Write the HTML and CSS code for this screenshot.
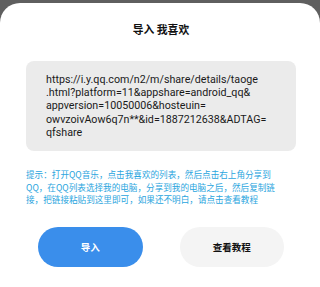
FILE: index.html
```html
<!DOCTYPE html>
<html lang="zh-CN">
<head>
<meta charset="utf-8">
<title>导入 我喜欢</title>
<link rel="stylesheet" href="styles.css">
</head>
<body>
<div class="sheet">
  <h1 class="title">导入 我喜欢</h1>
  <div class="link-box">https://i.y.qq.com/n2/m/share/details/taoge<br>.html?platform=11&amp;appshare=android_qq&amp;<br>appversion=10050006&amp;hosteuin=<br>owvzoivAow6q7n**&amp;id=1887212638&amp;ADTAG=<br>qfshare</div>
  <p class="hint">提示：打开QQ音乐，点击我喜欢的列表，然后点击右上角分享到<br>QQ，在QQ列表选择我的电脑，分享到我的电脑之后，然后复制链<br>接，把链接粘贴到这里即可，如果还不明白，请点击查看教程</p>
  <div class="actions">
    <button class="btn btn-primary">导入</button>
    <button class="btn btn-secondary">查看教程</button>
  </div>
</div>
</body>
</html>
```
FILE: styles.css
```css
html, body {
  margin: 0;
  padding: 0;
}
body {
  background: #5f5f5f;
  width: 320px;
  height: 287px;
  overflow: hidden;
  font-family: Roboto, "Noto Sans CJK SC", sans-serif;
}
.sheet {
  margin-top: 3px;
  height: 284px;
  background: #ffffff;
  border-radius: 20px 20px 0 0;
  padding: 18px 24px 0 26px;
  box-sizing: border-box;
}
.title {
  margin: 0;
  height: 16px;
  font-size: 10.8px;
  line-height: 16px;
  font-weight: 700;
  color: #111;
  text-align: center;
  font-family: "Noto Sans CJK SC", sans-serif;
}
.link-box {
  margin-top: 24px;
  height: 90px;
  box-sizing: border-box;
  background: #ebebeb;
  border-radius: 8px;
  padding: 12px 10px 0 20px;
  font-size: 10.7px;
  line-height: 13.2px;
  color: #1a1a1a;
  white-space: nowrap;
}
.hint {
  margin: 17px 0 0 0;
  height: 38px;
  font-size: 8.6px;
  line-height: 12.5px;
  color: #2aa5de;
  font-family: "Noto Sans CJK SC", sans-serif;
  white-space: nowrap;
}
.actions {
  margin-top: 21px;
  display: flex;
  gap: 37px;
  padding: 0 12px 0 12px;
}
.btn {
  flex: 1;
  height: 40px;
  border: none;
  border-radius: 20px;
  font-family: "Noto Sans CJK SC", sans-serif;
  font-weight: 700;
  font-size: 9.5px;
  padding: 0;
}
.btn-primary {
  background: #3a8eeb;
  color: #ffffff;
}
.btn-secondary {
  background: #f4f4f4;
  color: #111111;
}
```
